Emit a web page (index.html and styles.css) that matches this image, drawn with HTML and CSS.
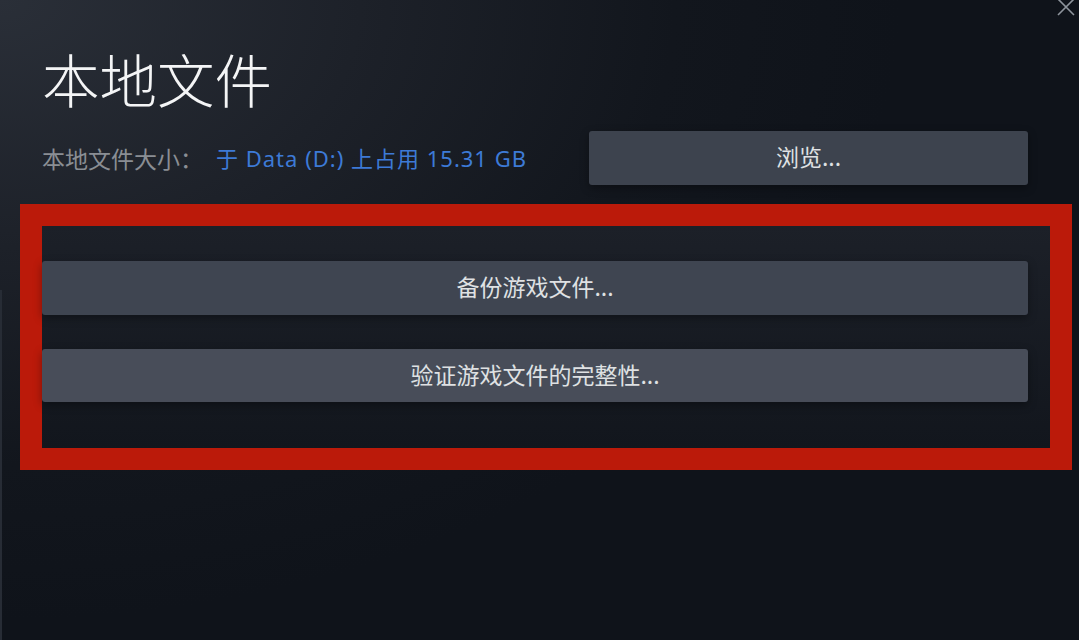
FILE: index.html
```html
<!DOCTYPE html>
<html lang="zh-CN">
<head>
<meta charset="utf-8">
<title>本地文件</title>
<link rel="stylesheet" href="styles.css">
</head>
<body>
<div class="dialog">
  <button class="close" aria-label="关闭">
    <svg width="20" height="20" viewBox="0 0 20 20"><path d="M2 2 L18 18 M18 2 L2 18" stroke="#8e949c" stroke-width="1.6" fill="none"/></svg>
  </button>
  <span class="edge"></span>
  <div class="content">
    <h1 class="title">本地文件</h1>
    <div class="size-row">
      <div class="size-info">
        <span class="size-label">本地文件大小：</span>
        <span class="size-value">于 Data (D:) 上占用 15.31 GB</span>
      </div>
      <button class="btn btn-browse">浏览...</button>
    </div>
    <section class="highlight">
      <button class="btn btn-wide btn-a">备份游戏文件...</button>
      <button class="btn btn-wide btn-b">验证游戏文件的完整性...</button>
    </section>
  </div>
</div>
</body>
</html>
```

FILE: styles.css
```css
html, body {
  margin: 0;
  padding: 0;
  height: 100%;
}
body {
  font-family: "Noto Sans", "Noto Sans CJK SC", sans-serif;
  background: #0f131a;
  overflow: hidden;
}
.dialog {
  position: relative;
  width: 1079px;
  height: 640px;
  background:
    radial-gradient(ellipse 900px 620px at 0% 0%, #2a2f38 0%, #1d2129 40%, #12161d 75%, #0f131a 100%);
  overflow: hidden;
}
.edge {
  position: absolute;
  left: 0;
  top: 290px;
  bottom: 0;
  width: 2px;
  background: #272c35;
}
.close {
  position: absolute;
  top: -3px;
  right: 3px;
  width: 20px;
  height: 20px;
  padding: 0;
  border: 0;
  background: transparent;
  display: flex;
}
.content {
  padding: 46px 51px 0 42px;
  display: flex;
  flex-direction: column;
}
.title {
  margin: 0;
  font-family: "Noto Sans CJK SC", sans-serif;
  font-weight: 300;
  font-size: 57.5px;
  line-height: 64px;
  color: #f4f5f6;
}
.size-row {
  margin-top: 21px;
  display: flex;
  align-items: center;
  justify-content: space-between;
}
.size-info {
  display: flex;
  align-items: center;
  line-height: 30px;
}
.size-label {
  font-family: "Noto Sans CJK SC", sans-serif;
  font-size: 23px;
  color: #8a8e94;
  margin-right: 13px;
}
.size-value {
  font-size: 22px;
  letter-spacing: 1px;
  color: #3d7ad6;
}
.btn {
  font-family: "Noto Sans CJK SC", sans-serif;
  font-size: 23px;
  color: #dfe1e3;
  border: 0;
  border-radius: 3px;
  height: 54px;
  padding: 0 0 4px;
  background: #3d434e;
  box-shadow: 0 3px 8px rgba(0, 0, 0, 0.35);
  cursor: pointer;
}
.btn-browse {
  width: 439px;
}
.highlight {
  margin: 19px -44px 0 -22px;
  border: 22px solid #bb1a0a;
  padding: 35px 22px 46px 0;
  display: flex;
  flex-direction: column;
  gap: 34px;
  background: linear-gradient(180deg, #1c2028 0%, #12161d 100%);
}
.btn-wide {
  width: 100%;
  height: 54px;
}
.btn-a {
  background: #3f4551;
}
.btn-b {
  height: 53px;
  background: #484d59;
}
```
